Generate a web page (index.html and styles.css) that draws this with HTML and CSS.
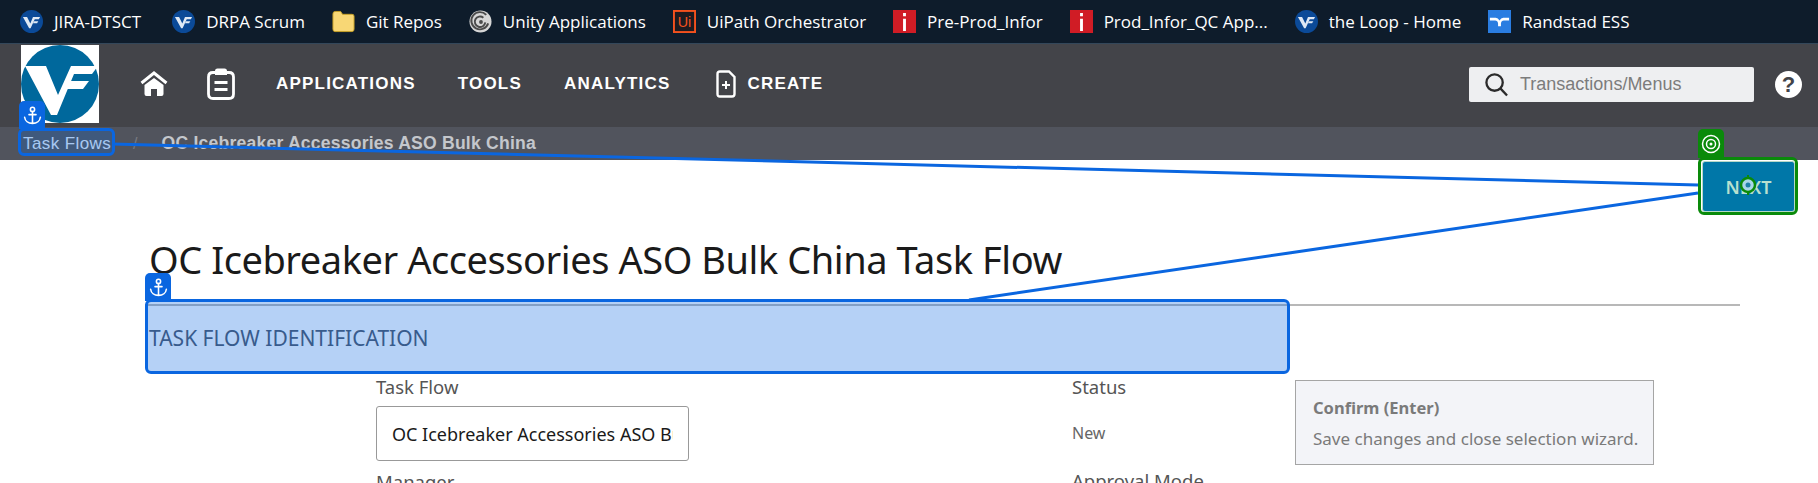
FILE: index.html
```html
<!DOCTYPE html>
<html lang="en">
<head>
  <meta charset="UTF-8">
  <meta name="viewport" content="width=device-width, initial-scale=1.0">
  <title>Task Flow</title>
  <link rel="stylesheet" href="styles.css">
</head>
<body>
  <svg class="defs" width="0" height="0">
    <symbol id="vf" viewBox="0 0 78 78">
      <circle cx="39" cy="39" r="39" fill="#00689c"/>
      <path fill="#fff" d="M4 21 H25 L37 50 L50 21 H77 L71 29 H53 L36 70 H30 Z"/>
      <path fill="#fff" d="M47 36 H68 L62 44 H44 Z"/>
    </symbol>
    <symbol id="vf-small" viewBox="0 0 78 78">
      <circle cx="39" cy="39" r="39" fill="#0b4a98"/>
      <path fill="#dfe9f5" d="M10 24 H24 L35 46 L44 24 H68 L64 31 H50 L36 62 H31 Z"/>
      <path fill="#dfe9f5" d="M47 38 H62 L58 45 H44 Z"/>
    </symbol>
    <symbol id="anchor" viewBox="0 0 24 24">
      <g fill="none" stroke="#fff" stroke-width="1.8" stroke-linecap="round">
        <circle cx="12" cy="5" r="2.4"/>
        <path d="M12 7.500 V21 M8 11 H16 M3 14 C3.500 18 7 21 12 21 C17 21 20.500 18 21 14"/>
      </g>
    </symbol>
    <symbol id="infor" viewBox="0 0 24 24">
      <rect width="24" height="24" fill="#d01c25"/>
      <path fill="#fff" d="M10.500 3 H13.500 V6.500 H10.500 Z M10.500 9 H13.500 V22 H10.500 Z"/>
    </symbol>
  </svg>

  <div class="bookmarks">
    <a class="bm"><svg class="fav"><use href="#vf-small"/></svg>JIRA-DTSCT</a>
    <a class="bm"><svg class="fav"><use href="#vf-small"/></svg>DRPA Scrum</a>
    <a class="bm">
      <svg class="fav" viewBox="0 0 24 24"><path fill="#f8d775" stroke="#c9a227" d="M1 4 Q1 1.500 3.500 1.500 H9 L11 4.500 H21 Q23 4.500 23 6.500 V20 Q23 22.500 21 22.500 H3 Q1 22.500 1 20 Z"/></svg>
      Git Repos
    </a>
    <a class="bm">
      <svg class="fav" viewBox="0 0 24 24"><circle cx="12" cy="12" r="11.500" fill="#d6d6d6"/><path d="M18 5 A9 9 0 1 0 20 14" fill="none" stroke="#4a4a4a" stroke-width="2"/><path d="M15 8 A5.500 5.500 0 1 0 17 13" fill="none" stroke="#4a4a4a" stroke-width="2"/><circle cx="12.500" cy="12.500" r="2" fill="#4a4a4a"/></svg>
      Unity Applications
    </a>
    <a class="bm">
      <svg class="fav" viewBox="0 0 24 24"><rect x="1" y="1" width="22" height="22" fill="#1d1b20" stroke="#f4511e" stroke-width="2"/><text x="12" y="18" class="ui-mark">Ui</text></svg>
      UiPath Orchestrator
    </a>
    <a class="bm"><svg class="fav"><use href="#infor"/></svg>Pre-Prod_Infor</a>
    <a class="bm"><svg class="fav"><use href="#infor"/></svg>Prod_Infor_QC App...</a>
    <a class="bm"><svg class="fav"><use href="#vf-small"/></svg>the Loop - Home</a>
    <a class="bm">
      <svg class="fav" viewBox="0 0 24 24"><rect width="24" height="24" fill="#2a7de1"/><path fill="#fff" d="M2 8 H8 Q10.500 8 12 11 Q13.500 8 16 8 H22 V11 H16.500 Q14 11 13.500 14 V17 H10.500 V14 Q10 11 7.500 11 H2 Z"/></svg>
      Randstad ESS
    </a>
  </div>

  <header class="topnav">
    <svg class="logo"><use href="#vf"/></svg>
    <svg class="nav-ico home" viewBox="0 0 28 26"><path fill="none" stroke="#fff" stroke-width="3" d="M1.500 12 L14 2 L26.500 12"/><path fill="#fff" fill-rule="evenodd" d="M4.500 14 L14 7 L23.500 14 V23 Q23.500 25 21.500 25 H17 V18 H11 V25 H6.500 Q4.500 25 4.500 23 Z"/></svg>
    <svg class="nav-ico clip" viewBox="0 0 28 32"><path fill="none" stroke="#fff" stroke-width="2.800" d="M6 4.500 H22 Q26.500 4.500 26.500 9 V26 Q26.500 30.500 22 30.500 H6 Q1.500 30.500 1.500 26 V9 Q1.500 4.500 6 4.500 Z"/><path fill="#fff" d="M8 3 Q8 0.500 10.500 0.500 H17.500 Q20 0.500 20 3 V7 H8 Z M7.500 13 H20.500 V16 H7.500 Z M7.500 20 H20.500 V23 H7.500 Z"/></svg>
    <nav class="menu">
      <a>APPLICATIONS</a>
      <a>TOOLS</a>
      <a>ANALYTICS</a>
      <a class="create">
        <svg viewBox="0 0 20 28" width="20" height="28"><path fill="none" stroke="#fff" stroke-width="2.400" d="M4 1.500 H13 L18.500 7 V24 Q18.500 26.500 16 26.500 H4 Q1.500 26.500 1.500 24 V4 Q1.500 1.500 4 1.500 Z"/><path fill="#fff" d="M9 11 H11 V14 H14 V16 H11 V19 H9 V16 H6 V14 H9 Z"/></svg>
        CREATE
      </a>
    </nav>
    <div class="search">
      <svg viewBox="0 0 26 26" width="25" height="25"><circle cx="11" cy="11" r="8.500" fill="none" stroke="#2b2b2b" stroke-width="2.400"/><path d="M17 17 L24 24.500" stroke="#2b2b2b" stroke-width="2.400"/></svg>
      <span>Transactions/Menus</span>
    </div>
    <span class="help">?</span>
  </header>

  <div class="crumbs">
    <span class="crumb-link">Task Flows</span>
    <span class="crumb-sep">/</span>
    <span class="crumb-current">OC Icebreaker Accessories ASO Bulk China</span>
  </div>

  <main class="content">
    <h1>OC Icebreaker Accessories ASO Bulk China Task Flow</h1>
    <section class="section">
      <h2>TASK FLOW IDENTIFICATION</h2>
      <div class="form-grid">
        <div class="field">
          <label>Task Flow</label>
          <div class="input"><span>OC Icebreaker Accessories ASO Bulk China</span></div>
          <label class="next-label">Manager</label>
        </div>
        <div class="field">
          <label>Status</label>
          <div class="value">New</div>
          <label class="next-label">Approval Mode</label>
        </div>
      </div>
    </section>
  </main>

  <button class="next-btn">NEXT</button>

  <!-- walkthrough overlay -->
  <svg class="links" width="1818" height="483">
    <path d="M112 144 L1698 185 M1698 193 L969 300" fill="none" stroke="#0a66e0" stroke-width="3"/>
  </svg>
  <div class="hl hl-crumb"></div>
  <div class="hl-tab tab-crumb"><svg width="21" height="21"><use href="#anchor"/></svg></div>
  <div class="hl hl-section"></div>
  <div class="hl-tab tab-section"><svg width="21" height="21"><use href="#anchor"/></svg></div>
  <div class="target-box"></div>
  <div class="target-tab">
    <svg width="20" height="20" viewBox="0 0 20 20"><g fill="none" stroke="#fff" stroke-width="1.500"><circle cx="10" cy="10" r="8.500"/><circle cx="10" cy="10" r="4.500"/></g><circle cx="10" cy="10" r="1.500" fill="#fff"/></svg>
  </div>
  <svg class="target-dot" width="20" height="20" viewBox="0 0 20 20">
    <circle cx="10" cy="10" r="7" fill="#a9d6e8" stroke="#0a8a0a" stroke-width="2.500"/>
    <circle cx="10" cy="10" r="2.500" fill="#1f7fa8"/>
    <path d="M10 0 V3 M10 17 V20" stroke="#0a8a0a" stroke-width="2"/>
  </svg>
  <div class="tooltip">
    <strong>Confirm (Enter)</strong>
    <p>Save changes and close selection wizard.</p>
  </div>
</body>
</html>
```

FILE: styles.css
```css
html,
body {
  height: 100%;
}

body {
  margin: 0;
  overflow: hidden;
  position: relative;
  background-color: #fff;
  font-family: "Liberation Sans", Arial, sans-serif;
}

.defs {
  position: absolute;
}

/* Browser bookmarks bar */
.bookmarks {
  height: 43px;
  padding-left: 20px;
  display: flex;
  align-items: center;
  gap: 27px;
  background-color: #0e1c2b;
  border-bottom: 1px solid #33475a;
  color: #fff;
  font-family: "Open Sans", sans-serif;
  font-size: 17px;
  white-space: nowrap;
}

.bm {
  display: flex;
  align-items: center;
  gap: 11px;
}

.bm:first-child {
  margin-right: 4px;
}

.fav {
  width: 23px;
  height: 23px;
  flex: none;
}

.ui-mark {
  fill: #f4511e;
  font-family: "Liberation Sans", sans-serif;
  font-size: 15px;
  text-anchor: middle;
}

/* Main navigation */
.topnav {
  height: 80px;
  padding-bottom: 3px;
  display: flex;
  align-items: center;
  background-color: #434449;
}

.logo {
  width: 78px;
  height: 78px;
  margin-left: 21px;
  background-color: #fff;
}

.nav-ico.home {
  width: 28px;
  height: 26px;
  margin-left: 41px;
}

.nav-ico.clip {
  width: 28px;
  height: 32px;
  margin-left: 39px;
}

.menu {
  display: flex;
  align-items: center;
  margin-left: 41px;
  gap: 42px;
  color: #fff;
  font-size: 17px;
  font-weight: bold;
  letter-spacing: 1.2px;
}

.create {
  display: flex;
  align-items: center;
  gap: 11px;
  margin-left: 4px;
}

.search {
  width: 285px;
  height: 35px;
  margin-left: auto;
  display: flex;
  align-items: center;
  gap: 11px;
  box-sizing: border-box;
  padding-left: 15px;
  border-radius: 2px;
  background-color: #eeeff1;
  color: #7c7c7c;
  font-size: 18px;
}

.help {
  width: 27px;
  height: 27px;
  margin: 0 16px 0 21px;
  border-radius: 50%;
  background-color: #fff;
  color: #434449;
  font-size: 22px;
  font-weight: bold;
  line-height: 27px;
  text-align: center;
}

/* Breadcrumb */
.crumbs {
  height: 33px;
  display: flex;
  align-items: center;
  padding-left: 23px;
  background-color: #51545d;
  color: #c4c7cc;
  font-size: 17.6px;
}

.crumb-link {
  color: #dde9f9;
  font-size: 17px;
  letter-spacing: 0.4px;
}

.crumb-sep {
  margin: 0 24px 0 22px;
  color: #777a82;
  font-size: 16px;
}

.crumb-current {
  font-weight: bold;
  letter-spacing: 0.2px;
}

/* Page content */
.content {
  padding-left: 149px;
  color: #1a1a1a;
  font-family: "Noto Sans", sans-serif;
}

.content h1 {
  margin: 0;
  padding-top: 75px;
  height: 69px;
  font-size: 38px;
  font-weight: normal;
  line-height: 48px;
  letter-spacing: -0.45px;
  white-space: nowrap;
}

.section {
  margin-left: -4px;
  margin-right: 78px;
  border-top: 2px solid #b8b8b8;
}

.section h2 {
  margin: 0;
  padding: 18px 0 0 4px;
  height: 51px;
  color: #4d5668;
  font-size: 21px;
  font-weight: normal;
  line-height: 28px;
}

.form-grid {
  display: grid;
  grid-template-columns: 696px 1fr;
  margin-left: 231px;
}

.field label {
  display: block;
  color: #555;
  font-size: 18.5px;
  line-height: 24px;
}

.input {
  width: 313px;
  height: 55px;
  margin-top: 7px;
  box-sizing: border-box;
  padding: 0 15px;
  display: flex;
  align-items: center;
  overflow: hidden;
  border: 1px solid #999;
  border-radius: 3px;
  color: #1a1a1a;
  font-size: 18px;
  white-space: nowrap;
}

.input span {
  overflow: hidden;
}

.value {
  height: 55px;
  margin-top: 6px;
  display: flex;
  align-items: center;
  color: #666;
  font-size: 16px;
}

.field .next-label {
  margin-top: 9px;
}

/* NEXT button under the highlight */
.next-btn {
  position: absolute;
  left: 1702px;
  top: 161px;
  width: 93px;
  height: 51px;
  border: 1px solid #b5d8c8;
  border-radius: 3px;
  background-color: #0077a8;
  color: #b9e0cf;
  font-family: "Noto Sans", sans-serif;
  font-size: 18px;
  font-weight: 600;
}

/* Walkthrough overlay */
.links {
  position: absolute;
  left: 0;
  top: 0;
  pointer-events: none;
}

.hl {
  position: absolute;
  box-sizing: border-box;
  border: 3px solid #0a66e0;
  border-radius: 6px;
}

.hl-crumb {
  left: 18px;
  top: 128px;
  width: 97px;
  height: 28px;
  background-color: rgba(10, 102, 224, 0.25);
}

.hl-section {
  left: 145px;
  top: 299px;
  width: 1145px;
  height: 75px;
  background-color: rgba(10, 102, 224, 0.3);
}

.hl-tab {
  position: absolute;
  width: 26px;
  height: 28px;
  display: flex;
  align-items: center;
  justify-content: center;
  border-radius: 5px 5px 0 0;
  background-color: #0a66e0;
}

.tab-crumb {
  left: 19px;
  top: 101px;
}

.tab-section {
  left: 145px;
  top: 273px;
}

.target-box {
  position: absolute;
  left: 1698px;
  top: 157px;
  width: 100px;
  height: 58px;
  box-sizing: border-box;
  border: 3px solid #0a8a0a;
  border-radius: 6px;
}

.target-tab {
  position: absolute;
  left: 1698px;
  top: 129px;
  width: 26px;
  height: 29px;
  display: flex;
  align-items: center;
  justify-content: center;
  border-radius: 5px 5px 0 0;
  background-color: #0a8a0a;
}

.target-dot {
  position: absolute;
  left: 1738px;
  top: 175px;
}

.tooltip {
  position: absolute;
  left: 1295px;
  top: 380px;
  width: 359px;
  height: 85px;
  box-sizing: border-box;
  padding: 15px 0 0 17px;
  border: 1px solid #a5a5a5;
  background-color: #f3f4f8;
  color: #7a7a7a;
  font-family: "Noto Sans", sans-serif;
  font-size: 17px;
}

.tooltip strong {
  font-size: 16.5px;
}

.tooltip p {
  margin: 8px 0 0;
}
```
